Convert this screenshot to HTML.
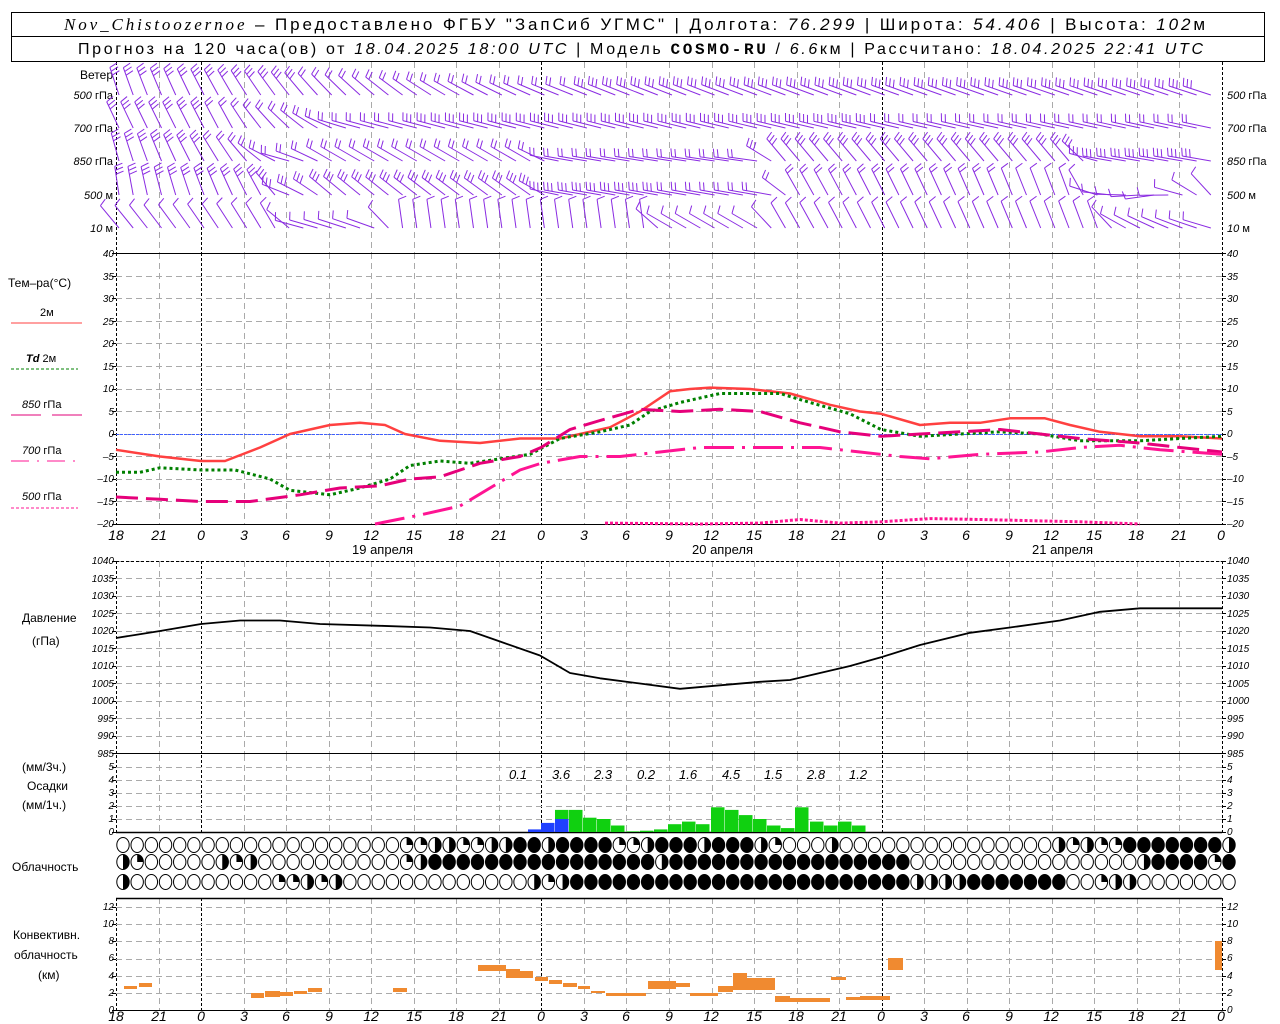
<!DOCTYPE html>
<html><head><meta charset="utf-8">
<style>
html,body{margin:0;padding:0;background:#fff;width:1280px;height:1024px;overflow:hidden}
svg{display:block}
text{font-family:"Liberation Sans","DejaVu Sans",sans-serif;fill:#000}
.t{font-size:10px;font-style:italic}
.h{font-size:14px;font-style:italic}
.l{font-size:12px}
</style></head><body>
<svg id="s" width="1280" height="1024" viewBox="0 0 1280 1024" xmlns="http://www.w3.org/2000/svg">
<rect x="0" y="0" width="1280" height="1024" fill="#fff"/>
<g id="grid"></g>
<!-- header -->
<rect x="11.5" y="12.5" width="1253" height="49" fill="none" stroke="#000" stroke-width="1"/>
<line x1="11" y1="36.5" x2="1265" y2="36.5" stroke="#000"/>
<text x="64" y="30" style="font-size:17px" textLength="1141" lengthAdjust="spacing"><tspan font-family="Liberation Serif" font-style="italic">Nov_Chistoozernoe</tspan> – Предоставлено ФГБУ "ЗапСиб УГМС" | Долгота: <tspan font-style="italic">76.299</tspan> | Широта: <tspan font-style="italic">54.406</tspan> | Высота: <tspan font-style="italic">102</tspan>м</text>
<text x="78" y="54" style="font-size:16px" textLength="1125" lengthAdjust="spacing">Прогноз на 120 часа(ов) от <tspan font-style="italic">18.04.2025 18:00 UTC</tspan> | Модель <tspan font-family="Liberation Mono" font-weight="bold">COSMO-RU</tspan> / <tspan font-style="italic">6.6</tspan>км | Рассчитано: <tspan font-style="italic">18.04.2025 22:41 UTC</tspan></text>
<!-- wind labels -->
<g class="t" text-anchor="end" style="font-size:11px">
<text x="113" y="79" style="font-size:12px;font-style:normal">Ветер</text>
<text x="113" y="99"><tspan font-style="italic">500</tspan> <tspan font-style="normal">гПа</tspan></text>
<text x="113" y="132"><tspan font-style="italic">700</tspan> <tspan font-style="normal">гПа</tspan></text>
<text x="113" y="165"><tspan font-style="italic">850</tspan> <tspan font-style="normal">гПа</tspan></text>
<text x="113" y="199"><tspan font-style="italic">500</tspan> <tspan font-style="normal">м</tspan></text>
<text x="113" y="232"><tspan font-style="italic">10</tspan>   <tspan font-style="normal">м</tspan></text>
</g>
<g class="t" style="font-size:11px">
<text x="1227" y="99"><tspan font-style="italic">500</tspan> <tspan font-style="normal">гПа</tspan></text>
<text x="1227" y="132"><tspan font-style="italic">700</tspan> <tspan font-style="normal">гПа</tspan></text>
<text x="1227" y="165"><tspan font-style="italic">850</tspan> <tspan font-style="normal">гПа</tspan></text>
<text x="1227" y="199"><tspan font-style="italic">500</tspan> <tspan font-style="normal">м</tspan></text>
<text x="1227" y="232"><tspan font-style="italic">10</tspan>   <tspan font-style="normal">м</tspan></text>
</g>
<!-- temp legend -->
<text x="8" y="287" class="l">Тем–ра(°С)</text>
<text x="40" y="316" class="t" style="font-style:normal;font-size:11px">2м</text>
<line x1="11" y1="323" x2="82" y2="323" stroke="#ff4040"/>
<text x="26" y="362" class="t" style="font-size:11px"><tspan font-weight="bold">Td</tspan>   <tspan font-style="normal">2м</tspan></text>
<line x1="11" y1="369" x2="78" y2="369" stroke="#008000" stroke-dasharray="3,2"/>
<text x="22" y="408" class="t" style="font-size:11px">850 <tspan font-style="normal">гПа</tspan></text>
<line x1="11" y1="415" x2="41" y2="415" stroke="#e0007a"/><line x1="52" y1="415" x2="82" y2="415" stroke="#e0007a"/>
<text x="22" y="454" class="t" style="font-size:11px">700 <tspan font-style="normal">гПа</tspan></text>
<line x1="11" y1="461" x2="78" y2="461" stroke="#ff1493" stroke-dasharray="18,8,2,8"/>
<text x="22" y="500" class="t" style="font-size:11px">500 <tspan font-style="normal">гПа</tspan></text>
<line x1="11" y1="508" x2="78" y2="508" stroke="#ff1493" stroke-dasharray="3,2"/>
<text x="22" y="622" class="l">Давление</text>
<text x="32" y="645" class="l">(гПа)</text>
<text x="22" y="771" class="l">(мм/3ч.)</text>
<text x="27" y="790" class="l">Осадки</text>
<text x="22" y="809" class="l">(мм/1ч.)</text>
<text x="12" y="871" class="l">Облачность</text>
<text x="13" y="939" class="l">Конвективн.</text>
<text x="14" y="959" class="l">облачность</text>
<text x="38" y="979" class="l">(км)</text>
<!-- dates -->
<text x="352" y="554" style="font-size:13px">19 апреля</text>
<text x="692" y="554" style="font-size:13px">20 апреля</text>
<text x="1032" y="554" style="font-size:13px">21 апреля</text>
<!-- precip labels -->
<g class="h" style="font-size:13px">
<text x="509" y="779">0.1</text><text x="552" y="779">3.6</text><text x="594" y="779">2.3</text><text x="637" y="779">0.2</text><text x="679" y="779">1.6</text><text x="722" y="779">4.5</text><text x="764" y="779">1.5</text><text x="807" y="779">2.8</text><text x="849" y="779">1.2</text>
</g>
<g class="t" text-anchor="end">
<text x="114" y="257">40</text><text x="114" y="280">35</text><text x="114" y="302">30</text><text x="114" y="325">25</text><text x="114" y="347">20</text><text x="114" y="370">15</text><text x="114" y="392">10</text><text x="114" y="415">5</text><text x="114" y="437">0</text><text x="114" y="460">–5</text><text x="114" y="482">–10</text><text x="114" y="505">–15</text><text x="114" y="527">–20</text>
<text x="114" y="564">1040</text><text x="114" y="582">1035</text><text x="114" y="599">1030</text><text x="114" y="617">1025</text><text x="114" y="634">1020</text><text x="114" y="652">1015</text><text x="114" y="669">1010</text><text x="114" y="687">1005</text><text x="114" y="704">1000</text><text x="114" y="722">995</text><text x="114" y="739">990</text><text x="114" y="757">985</text>
<text x="114" y="770">5</text><text x="114" y="783">4</text><text x="114" y="796">3</text><text x="114" y="809">2</text><text x="114" y="822">1</text><text x="114" y="835">0</text>
<text x="114" y="910">12</text><text x="114" y="927">10</text><text x="114" y="944">8</text><text x="114" y="961">6</text><text x="114" y="979">4</text><text x="114" y="996">2</text><text x="114" y="1013">0</text>
</g>
<g class="t">
<text x="1227" y="257">40</text><text x="1227" y="280">35</text><text x="1227" y="302">30</text><text x="1227" y="325">25</text><text x="1227" y="347">20</text><text x="1227" y="370">15</text><text x="1227" y="392">10</text><text x="1227" y="415">5</text><text x="1227" y="437">0</text><text x="1227" y="460">–5</text><text x="1227" y="482">–10</text><text x="1227" y="505">–15</text><text x="1227" y="527">–20</text>
<text x="1227" y="564">1040</text><text x="1227" y="582">1035</text><text x="1227" y="599">1030</text><text x="1227" y="617">1025</text><text x="1227" y="634">1020</text><text x="1227" y="652">1015</text><text x="1227" y="669">1010</text><text x="1227" y="687">1005</text><text x="1227" y="704">1000</text><text x="1227" y="722">995</text><text x="1227" y="739">990</text><text x="1227" y="757">985</text>
<text x="1227" y="770">5</text><text x="1227" y="783">4</text><text x="1227" y="796">3</text><text x="1227" y="809">2</text><text x="1227" y="822">1</text><text x="1227" y="835">0</text>
<text x="1227" y="910">12</text><text x="1227" y="927">10</text><text x="1227" y="944">8</text><text x="1227" y="961">6</text><text x="1227" y="979">4</text><text x="1227" y="996">2</text><text x="1227" y="1013">0</text>
</g>
<g class="h" text-anchor="middle">
<text x="116" y="540">18</text><text x="159" y="540">21</text><text x="201" y="540">0</text><text x="244" y="540">3</text><text x="286" y="540">6</text><text x="329" y="540">9</text><text x="371" y="540">12</text><text x="414" y="540">15</text><text x="456" y="540">18</text><text x="499" y="540">21</text><text x="541" y="540">0</text><text x="584" y="540">3</text><text x="626" y="540">6</text><text x="669" y="540">9</text><text x="711" y="540">12</text><text x="754" y="540">15</text><text x="796" y="540">18</text><text x="839" y="540">21</text><text x="881" y="540">0</text><text x="924" y="540">3</text><text x="966" y="540">6</text><text x="1009" y="540">9</text><text x="1051" y="540">12</text><text x="1094" y="540">15</text><text x="1136" y="540">18</text><text x="1179" y="540">21</text><text x="1221" y="540">0</text>
<text x="116" y="1021">18</text><text x="159" y="1021">21</text><text x="201" y="1021">0</text><text x="244" y="1021">3</text><text x="286" y="1021">6</text><text x="329" y="1021">9</text><text x="371" y="1021">12</text><text x="414" y="1021">15</text><text x="456" y="1021">18</text><text x="499" y="1021">21</text><text x="541" y="1021">0</text><text x="584" y="1021">3</text><text x="626" y="1021">6</text><text x="669" y="1021">9</text><text x="711" y="1021">12</text><text x="754" y="1021">15</text><text x="796" y="1021">18</text><text x="839" y="1021">21</text><text x="881" y="1021">0</text><text x="924" y="1021">3</text><text x="966" y="1021">6</text><text x="1009" y="1021">9</text><text x="1051" y="1021">12</text><text x="1094" y="1021">15</text><text x="1136" y="1021">18</text><text x="1179" y="1021">21</text><text x="1221" y="1021">0</text>
</g>
<g id="dyn"></g>
</svg>
<script>
(function(){
var NS="http://www.w3.org/2000/svg";
var G=document.getElementById("grid"),D=document.getElementById("dyn");
function el(p,tag,a){var e=document.createElementNS(NS,tag);for(var k in a)e.setAttribute(k,a[k]);p.appendChild(e);return e;}
function ln(p,x1,y1,x2,y2,c,w,da){var a={x1:x1,y1:y1,x2:x2,y2:y2,stroke:c,"stroke-width":w||1};if(da)a["stroke-dasharray"]=da;return el(p,"line",a);}
var X0=116,X1=1222,HX=(X1-X0)/78;
function hx(h){return X0+h*HX;}
var spans=[[62,253],[253,524],[561,755],[755,832],[898,1010]];
spans.forEach(function(s){
 for(var i=0;i<=26;i++){var x=Math.round(hx(i*3))+0.5;var day=(i===0||i===26||(i-2)%8===0);
  ln(G,x,s[0],x,s[1],day?"#000":"#aaa",1,day?"3,2":"6,4");}
});
function hg(y0,y1,n){for(var i=0;i<=n;i++){var y=Math.round(y0+(y1-y0)*i/n)+0.5;ln(G,X0,y,X1,y,"#aaa",1,"6,4");ln(G,X0-4,y,X0,y,"#000");ln(G,X1,y,X1+4,y,"#000");}}
hg(253,524,12);hg(561,753,11);hg(767,832,5);hg(907,1010,6);
ln(G,X0,253.5,X1,253.5,"#000");ln(G,X0,561.5,X1,561.5,"#000",1,"3,2");
ln(G,X0,753.5,X1,753.5,"#000");ln(G,X0,832.5,X1,832.5,"#000",1.5);
ln(G,X0,898.5,X1,898.5,"#000",1.5);ln(G,X0,1010.5,X1,1010.5,"#000");ln(G,X0,524.5,X1,524.5,"#000");
ln(G,X0,434.5,X1,434.5,"#4060ff",1,"3,1");
function interp(k,x){if(x<=k[0][0])return k[0][1];for(var i=1;i<k.length;i++){if(x<=k[i][0]){var t=(x-k[i-1][0])/(k[i][0]-k[i-1][0]);return k[i-1][1]+t*(k[i][1]-k[i-1][1]);}}return k[k.length-1][1];}
var rows=[
 {y:95,k:[[116,-18],[230,-30],[340,-45],[450,-60],[560,-68],[1222,-72]],n:[[116,3],[500,2],[700,3],[1222,3]]},
 {y:128,k:[[116,-25],[230,-28],[300,-50],[350,-75],[1222,-78]],n:[[116,3],[300,2],[560,3],[1222,2]]},
 {y:161,k:[[116,-15],[240,-35],[290,-75],[330,-60],[540,-60],[560,-80],[760,-82],[780,-40],[1080,-40],[1100,-80],[1222,-80]],n:[[116,3],[300,2],[1222,3]]},
 {y:195,k:[[116,-8],[270,-30],[290,-70],[330,-50],[540,-55],[560,-80],[780,-80],[790,-30],[1080,-20],[1100,-80],[1160,-100],[1222,-30]],n:[[116,3],[560,3],[800,2],[1222,1]]},
 {y:228,k:[[116,-40],[280,-30],[300,-75],[380,-70],[400,-8],[650,-8],[660,-60],[760,-60],[780,-30],[1100,-20],[1120,-60],[1222,-75]],n:[[116,1],[1222,1]]}
];
rows.forEach(function(r){
 for(var i=0;i<78;i++){var x=hx(i)+3;var a=interp(r.k,x)*Math.PI/180;var L=29;
  var dx=Math.sin(a),dy=-Math.cos(a);var tx=x+L*dx,ty=r.y+L*dy;
  ln(D,x,r.y,tx,ty,"#8a2be2",1);
  var n=Math.round(interp(r.n,x));var px=-dy,py=dx;
  for(var j=0;j<n;j++){var bx=tx-dx*4*j,by=ty-dy*4*j;
   ln(D,bx,by,bx+px*8+dx*2,by+py*8+dy*2,"#8a2be2",1);}
 }
});
function ty(T){return 434-T*4.5;}
function pl(pts,f,c,w,da){var s=pts.map(function(p){return p[0]+","+f(p[1]).toFixed(1);}).join(" ");var a={points:s,fill:"none",stroke:c,"stroke-width":w,"stroke-linejoin":"round"};if(da)a["stroke-dasharray"]=da;el(D,"polyline",a);}
pl([[116,-3.5],[160,-5],[201,-6],[225,-6],[260,-3],[290,0],[330,2],[360,2.5],[385,2],[405,0],[440,-1.5],[480,-2],[520,-1],[560,-1],[580,0],[610,1.5],[640,5],[670,9.5],[690,10],[710,10.3],[750,10],[790,9],[830,6.5],[860,5],[881,4.5],[920,2],[950,2.5],[980,2.5],[1010,3.5],[1045,3.5],[1070,2],[1100,0.5],[1140,-0.5],[1180,-0.5],[1222,-1]],ty,"#ff4040",2.5);
pl([[116,-8.5],[140,-8.5],[160,-7.5],[201,-8],[235,-8],[270,-10],[290,-12.5],[330,-13.5],[360,-12],[390,-10],[410,-7],[440,-6],[470,-6.5],[500,-5.5],[530,-4.5],[560,-1],[600,0.5],[630,2],[650,5],[680,7],[720,9],[780,9],[810,7],[850,4.5],[881,1],[920,-0.5],[960,0],[1000,0.5],[1040,0],[1080,-1.5],[1140,-1.5],[1180,-1],[1222,-0.5]],ty,"#008000",3,"3,3");
pl([[116,-14],[160,-14.5],[201,-15],[250,-15],[300,-13.5],[340,-12],[380,-11.5],[410,-10],[440,-9.5],[480,-6.5],[520,-5],[541,-3],[570,1],[600,3],[640,5.5],[680,5],[720,5.5],[760,5],[800,2.5],[840,0.5],[881,-0.5],[920,0],[960,0.5],[1000,1],[1040,0],[1080,-1],[1140,-2],[1180,-3],[1222,-4]],ty,"#e6007a",3,"22,8");
pl([[375,-20],[420,-18],[460,-16],[490,-12],[520,-8],[541,-6.5],[580,-5],[620,-5],[660,-4],[700,-3],[760,-3],[820,-3],[860,-4],[900,-5],[930,-5.5],[980,-4.5],[1040,-4],[1080,-3],[1120,-2.5],[1160,-3.5],[1222,-4.5]],ty,"#ff1493",3,"30,8,3,8");
pl([[605,-19.8],[700,-20],[760,-19.8],[800,-19],[840,-19.8],[881,-19.5],[930,-18.8],[980,-19],[1080,-19.5],[1140,-20]],ty,"#ff1493",3,"3,2");
pl([[116,1018],[160,1020],[201,1022],[240,1023],[280,1023],[320,1022],[380,1021.5],[430,1021],[470,1020],[500,1017],[540,1013],[570,1008],[600,1006.5],[640,1005],[680,1003.5],[720,1004.5],[760,1005.5],[790,1006],[820,1008],[850,1010],[881,1012.5],[920,1016],[970,1019.5],[1010,1021],[1060,1023],[1100,1025.5],[1140,1026.5],[1180,1026.5],[1222,1026.5]],function(P){return 561+(1040-P)*3.5;},"#000",1.8);
var pr=[[528,0.2,"b"],[541,0.7,"b"],[555,1.7,"g",1.0],[569,1.7,"g"],[583,1.1,"g"],[597,1.0,"g"],[611,0.5,"g"],[626,0.05,"g"],[640,0.1,"g"],[654,0.2,"g"],[668,0.6,"g"],[682,0.8,"g"],[696,0.6,"g"],[711,1.9,"g"],[725,1.7,"g"],[739,1.3,"g"],[753,1.0,"g"],[767,0.5,"g"],[781,0.3,"g"],[795,1.9,"g"],[810,0.8,"g"],[824,0.5,"g"],[838,0.8,"g"],[852,0.5,"g"]];
pr.forEach(function(p){var h=p[1]*13;el(D,"rect",{x:p[0],y:832-h,width:13.5,height:h,fill:p[2]=="b"?"#2040ff":"#10d010"});
 if(p[3]){var h2=p[3]*13;el(D,"rect",{x:p[0],y:832-h2,width:13.5,height:h2,fill:"#2040ff"});}});
function mk(spec){var a=[];for(var i=0;i<79;i++)a.push("o");spec.forEach(function(s){for(var i=s[0];i<=s[1];i++)a[i]=s[2];});return a;}
var c1=mk([[20,21,"q"],[22,23,"h"],[24,25,"q"],[26,27,"h"],[28,34,"f"],[30,30,"h"],[35,36,"q"],[37,37,"h"],[38,44,"f"],[41,41,"h"],[45,45,"h"],[46,46,"q"],[50,50,"h"],[66,66,"h"],[67,67,"q"],[68,68,"h"],[69,70,"q"],[71,77,"f"],[78,78,"h"]]);
var c2=mk([[0,0,"h"],[1,1,"q"],[7,7,"h"],[8,8,"q"],[9,9,"h"],[20,20,"q"],[21,21,"h"],[22,55,"f"],[38,38,"h"],[72,72,"h"],[73,78,"f"],[77,77,"q"]]);
var c3=mk([[0,0,"h"],[11,12,"q"],[13,13,"h"],[14,14,"q"],[15,15,"h"],[29,29,"h"],[30,30,"q"],[31,31,"h"],[32,66,"f"],[56,59,"h"],[69,69,"q"],[70,71,"h"]]);
[[845,c1],[862,c2],[882,c3]].forEach(function(r){var y=r[0];
 for(var i=0;i<79;i++){var cx=hx(i)+7,t=r[1][i];
  var e={cx:cx,cy:y,rx:6.2,ry:7.5,stroke:"#000","stroke-width":1,fill:t=="f"?"#000":"#fff"};el(D,"ellipse",e);
  if(t=="h"){el(D,"path",{d:"M"+cx+","+(y-7.5)+" A6.2,7.5 0 0,1 "+cx+","+(y+7.5)+" Z",fill:"#000"});}
  if(t=="q"){el(D,"path",{d:"M"+cx+","+y+" L"+cx+","+(y-7.5)+" A6.2,7.5 0 0,1 "+(cx+6.2)+","+y+" Z",fill:"#000"});}
 }});
var cv=[[124,137,986,989],[139,152,983,987],[251,264,993,998],[265,280,991,997],[280,293,992,996],[294,307,991,994],[308,322,988,992],[393,407,988,992],[478,506,965,971],[506,520,969,976],[506,533,971,978],[535,548,977,981],[549,562,980,984],[563,577,983,987],[578,590,986,989],[591,605,991,993],[606,646,993,996],[648,676,981,989],[676,690,983,987],[690,718,993,996],[718,733,986,992],[733,747,973,990],[747,775,978,990],[775,790,996,1002],[790,830,998,1002],[831,846,977,980],[846,860,997,1000],[860,890,996,1000],[888,903,958,970],[1215,1222,941,970]];
cv.forEach(function(b){el(D,"rect",{x:b[0],y:b[2],width:b[1]-b[0],height:b[3]-b[2],fill:"#f08a30"});});
})();
</script>
</body></html>
